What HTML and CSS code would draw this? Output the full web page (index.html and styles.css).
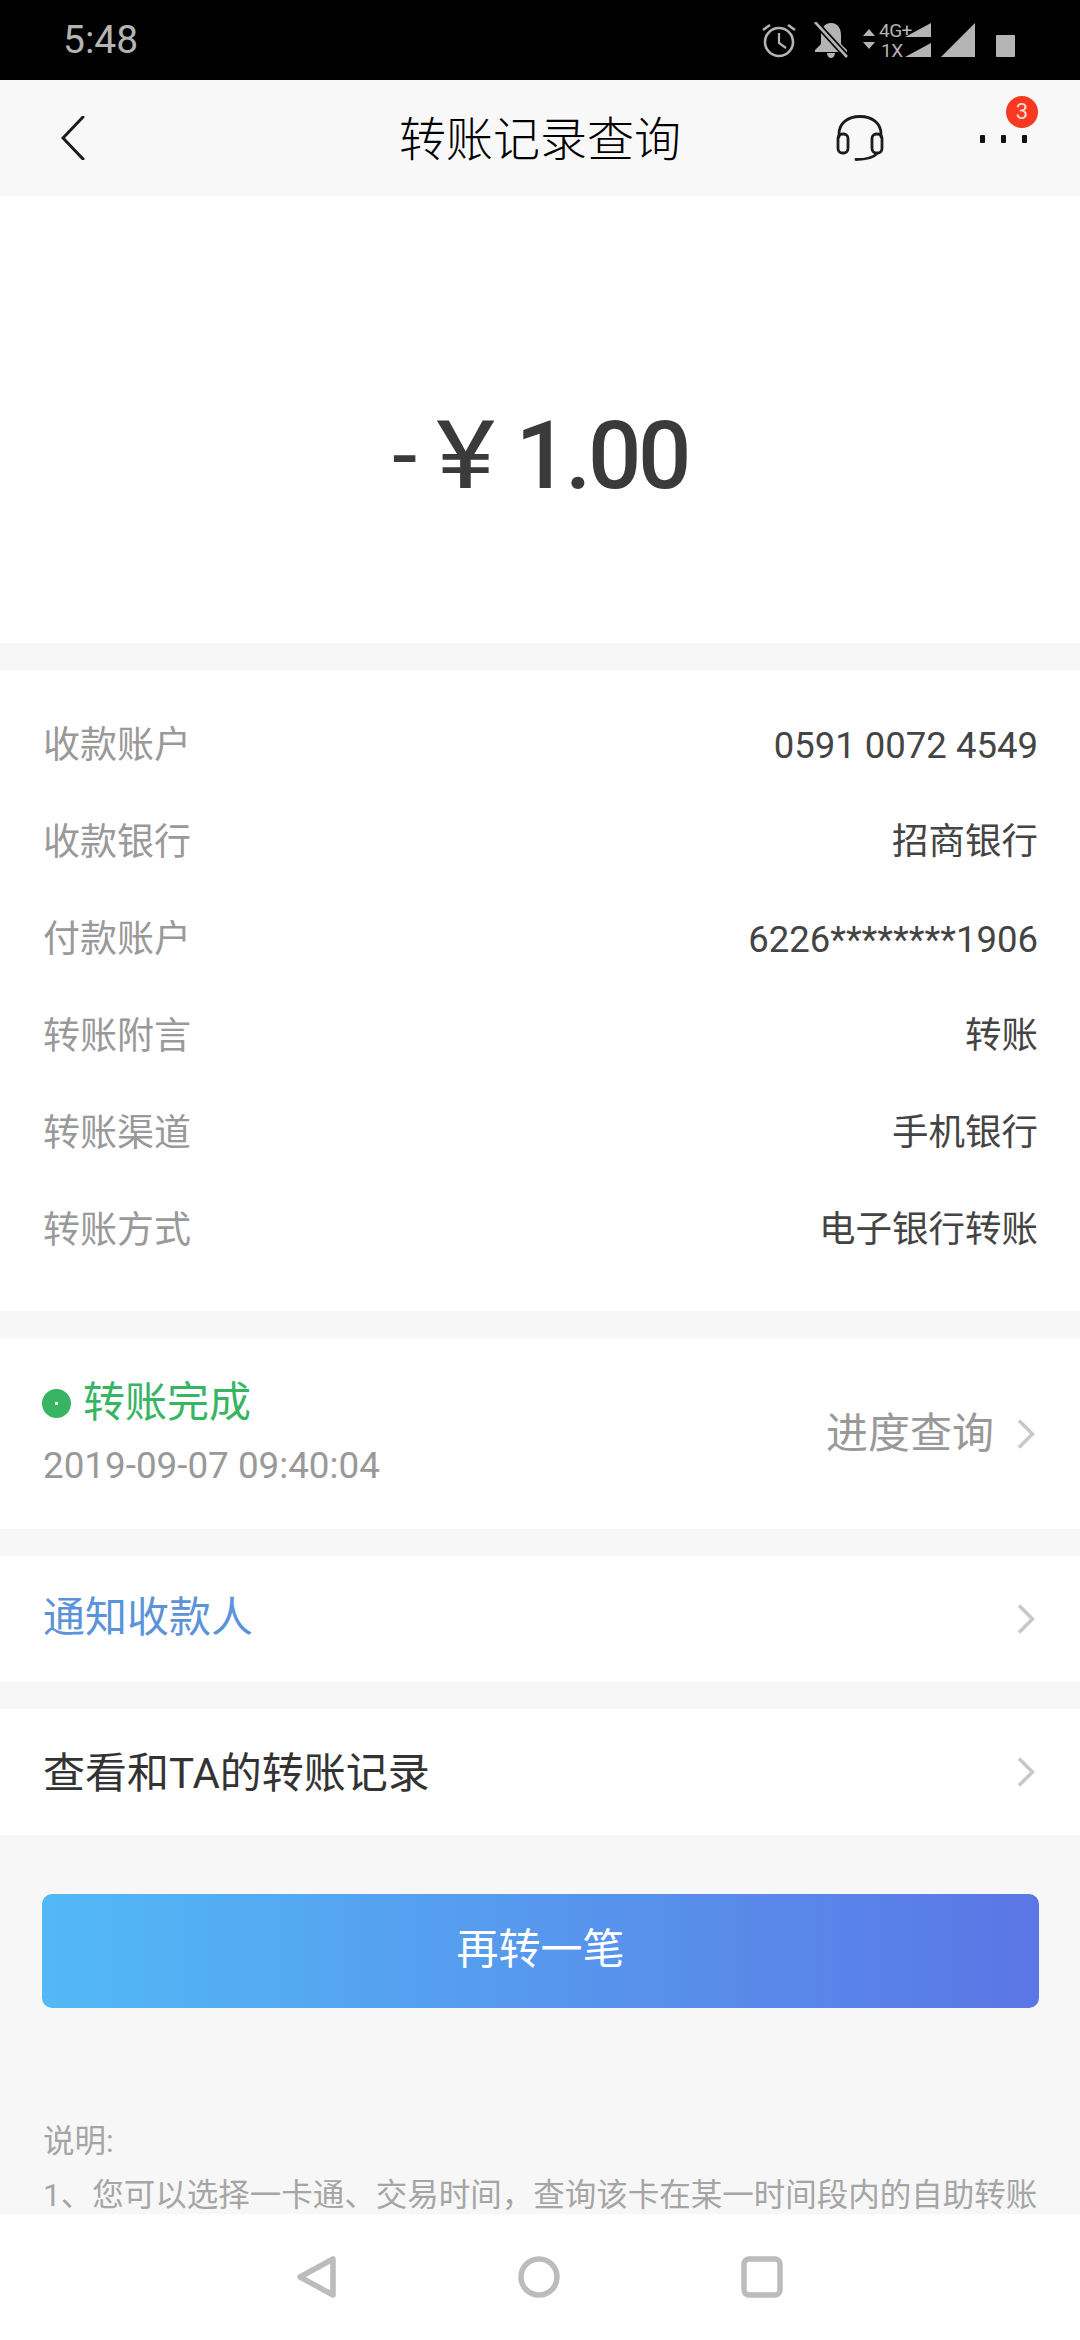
FILE: index.html
```html
<!DOCTYPE html>
<html lang="zh-CN">
<head>
  <meta charset="UTF-8" />
  <title>转账记录查询</title>
  <link rel="stylesheet" href="styles.css">
</head>
<body>
  <div class="phone">
    <div class="status-bar">
      <span class="clock">5:48</span>
      <div class="status-icons">
        <svg class="ic-alarm" width="36" height="36" viewBox="0 0 36 36" fill="none" stroke="#b4b4b4" stroke-width="2.6">
          <circle cx="18" cy="20" r="14"/>
          <path d="M18 11v10l7 5" stroke-width="2.2"/>
          <path d="M2 8l7-5M34 8l-7-5"/>
        </svg>
        <svg class="ic-bell" width="36" height="36" viewBox="0 0 36 36">
          <path fill="#b4b4b4" d="M18 1c-7 0-10 6-10 12v9l-6 6v2h32v-2l-6-6v-9c0-6-3-12-10-12zM14 31h8c0 3-2 5-4 5s-4-2-4-5z"/>
          <path d="M2 0l32 35" stroke="#000" stroke-width="6"/>
          <path d="M2 0l32 35" stroke="#b4b4b4" stroke-width="2.6"/>
        </svg>
        <svg class="ic-net" width="70" height="48" viewBox="0 -6 70 48" fill="#b4b4b4">
          <path d="M1 8l6-7 6 7zM1 14l6 7 6-7z" transform="translate(1 6)"/>
          <text class="net-label" x="18" y="15">4G+</text>
          <text class="net-label" x="20" y="35">1X</text>
          <path d="M44 15l26-14v14zM44 35l26-14v14z"/>
        </svg>
        <svg class="ic-signal" width="36" height="36" viewBox="0 0 36 36" fill="#b4b4b4">
          <path d="M1 35L35 1v34z"/>
        </svg>
        <div class="battery"></div>
      </div>
    </div>

    <header class="top-bar">
      <svg class="back" width="24" height="44" viewBox="0 0 24 44" fill="none" stroke="#1c1c1c" stroke-width="3" stroke-linecap="round">
        <path d="M22 1L2 22l20 21"/>
      </svg>
      <h1 class="title">转账记录查询</h1>
      <svg class="headset" width="48" height="46" viewBox="0 0 48 46" fill="none" stroke="#1c1c1c" stroke-width="2.8" stroke-linecap="round">
        <path d="M3 22V19C3 8 12 1.500 24 1.500S45 8 45 19v3"/>
        <rect x="2" y="19" width="10" height="19" rx="4.500"/>
        <rect x="36" y="19" width="10" height="19" rx="4.500"/>
        <path d="M20 44.500c9 0 17-1 21-6"/>
      </svg>
      <div class="more">
        <span class="dot"></span><span class="dot"></span><span class="dot"></span>
        <span class="badge">3</span>
      </div>
    </header>

    <section class="amount-box">
      <span class="amount-sign">-</span>
      <span class="amount-yen">¥</span>
      <span class="amount-num">1.00</span>
    </section>

    <section class="info card">
      <div class="info-row"><span class="info-label">收款账户</span><span class="info-value num">0591 0072 4549</span></div>
      <div class="info-row"><span class="info-label">收款银行</span><span class="info-value">招商银行</span></div>
      <div class="info-row"><span class="info-label">付款账户</span><span class="info-value num">6226********1906</span></div>
      <div class="info-row"><span class="info-label">转账附言</span><span class="info-value">转账</span></div>
      <div class="info-row"><span class="info-label">转账渠道</span><span class="info-value">手机银行</span></div>
      <div class="info-row"><span class="info-label">转账方式</span><span class="info-value">电子银行转账</span></div>
    </section>

    <section class="progress card">
      <div class="progress-left">
        <div class="progress-state"><span class="state-dot"></span>转账完成</div>
        <div class="progress-time">2019-09-07 09:40:04</div>
      </div>
      <span class="progress-link">进度查询</span>
      <svg class="chevron" width="18" height="30" viewBox="0 0 18 30" fill="none" stroke="#c8c8c8" stroke-width="3.600"><path d="M2 1.500L15.500 15 2 28.500"/></svg>
    </section>

    <a class="link-row card notify">
      <span>通知收款人</span>
      <svg class="chevron" width="18" height="30" viewBox="0 0 18 30" fill="none" stroke="#c8c8c8" stroke-width="3.600"><path d="M2 1.500L15.500 15 2 28.500"/></svg>
    </a>
    <a class="link-row card history">
      <span>查看和TA的转账记录</span>
      <svg class="chevron" width="18" height="30" viewBox="0 0 18 30" fill="none" stroke="#c8c8c8" stroke-width="3.600"><path d="M2 1.500L15.500 15 2 28.500"/></svg>
    </a>

    <div class="action">
      <button class="again-btn">再转一笔</button>
    </div>

    <div class="notes">
      <p>说明:</p>
      <p>1、您可以选择一卡通、交易时间，查询该卡在某一时间段内的自助转账</p>
    </div>

    <nav class="nav-bar">
      <svg width="40" height="42" viewBox="0 0 40 42" fill="none" stroke="#bcbcbc" stroke-width="5.500" stroke-linejoin="round"><path d="M36 3v36L3 21z"/></svg>
      <svg width="42" height="42" viewBox="0 0 42 42" fill="none" stroke="#bcbcbc" stroke-width="5.500"><circle cx="21" cy="21" r="18"/></svg>
      <svg width="42" height="42" viewBox="0 0 42 42" fill="none" stroke="#bcbcbc" stroke-width="5.500"><rect x="3" y="3" width="36" height="36" rx="5"/></svg>
    </nav>
  </div>
</body>
</html>
```

FILE: styles.css
```css
html, body {
  margin: 0;
  padding: 0;
  background: #f7f7f7;
}
body {
  font-family: Roboto, "Noto Sans CJK SC", sans-serif;
}
.phone {
  width: 1080px;
  height: 2340px;
  display: flex;
  flex-direction: column;
  overflow: hidden;
}
.status-bar {
  height: 80px;
  flex: none;
  background: #000;
  display: flex;
  align-items: center;
  justify-content: space-between;
  padding: 0 65px 0 63px;
}
.clock {
  color: #b4b4b4;
  font-size: 39px;
}
.status-icons {
  display: flex;
  align-items: center;
}
.status-icons svg {
  display: block;
}
.ic-alarm { margin-right: 16px; }
.ic-bell { margin-right: 12px; }
.ic-net { margin-right: 9px; }
.ic-signal { margin-right: 20px; }
.net-label {
  font-family: Roboto, sans-serif;
  font-size: 19px;
  letter-spacing: -0.5px;
}
.battery {
  width: 19px;
  height: 22px;
  margin-top: 12px;
  background: #b4b4b4;
  border-radius: 1px;
}
.top-bar {
  height: 116px;
  flex: none;
  box-sizing: border-box;
  padding-bottom: 6px;
  background: #f8f8f8;
  position: relative;
  display: flex;
  align-items: center;
  justify-content: center;
}
.back {
  position: absolute;
  left: 61px;
  top: 36px;
}
.title {
  margin: 0;
  font-size: 47px;
  font-weight: 300;
  color: #000;
}
.headset {
  position: absolute;
  left: 836px;
  top: 35px;
}
.more {
  position: absolute;
  left: 980px;
  top: 55px;
  display: flex;
  gap: 16px;
}
.dot {
  width: 5px;
  height: 8px;
  border-radius: 1px;
  background: #111;
}
.badge {
  position: absolute;
  left: 26px;
  top: -39px;
  width: 32px;
  height: 32px;
  border-radius: 50%;
  background: #f8391f;
  color: #fbd9d3;
  font-size: 22px;
  line-height: 32px;
  text-align: center;
}
.amount-box {
  height: 447px;
  flex: none;
  box-sizing: border-box;
  padding-top: 72px;
  background: #fff;
  display: flex;
  align-items: center;
  justify-content: center;
  color: #3a3a3a;
}
.amount-sign {
  font-size: 90px;
  margin-right: 24px;
}
.amount-yen {
  display: inline-block;
  font-size: 94px;
  margin-right: 25px;
  transform: scaleX(1.2);
}
.amount-num {
  font-size: 94px;
  font-weight: 500;
  letter-spacing: -3.5px;
}
.card {
  background: #fff;
}
.info {
  margin-top: 27px;
  padding: 24px 42px 35px 43px;
}
.info-row {
  height: 97px;
  display: flex;
  align-items: center;
  justify-content: space-between;
  font-size: 37px;
}
.info-row span {
  margin-bottom: 2px;
}
.info-label {
  color: #999;
}
.info-value {
  color: #444;
  font-size: 36.500px;
}
.info-row .num {
  margin: 6px 0 0;
}
.progress {
  margin-top: 27px;
  height: 191px;
  padding: 0 45px 0 43px;
  display: flex;
  align-items: center;
}
.progress-left {
  flex: 1;
  padding-bottom: 5px;
}
.progress-state {
  display: flex;
  align-items: center;
  color: #37b563;
  font-size: 42px;
  line-height: 56px;
}
.state-dot {
  width: 29px;
  height: 29px;
  margin: 0 12px 0 -1px;
  border-radius: 50%;
  background: #37b563;
  position: relative;
}
.state-dot::after {
  content: "";
  position: absolute;
  left: 13px;
  top: 13px;
  width: 3px;
  height: 3px;
  background: #fff;
}
.progress-time {
  margin-top: 13px;
  color: #999;
  font-size: 36.800px;
}
.progress-link {
  color: #999;
  font-size: 42px;
  margin: 0 23px 8px 0;
}
.link-row {
  margin-top: 27px;
  height: 126px;
  padding: 0 45px 0 43px;
  display: flex;
  align-items: center;
  justify-content: space-between;
  font-size: 42px;
}
.notify {
  color: #5b93db;
}
.notify span {
  margin-bottom: 12px;
}
.history {
  color: #333;
}
.history span {
  margin-bottom: 6px;
}
.action {
  padding: 59px 41px 0 42px;
}
.again-btn {
  display: block;
  width: 100%;
  height: 114px;
  padding: 0 0 12px;
  border: none;
  border-radius: 10px;
  background: linear-gradient(to right, #52b9f6, #5b76e5);
  color: #fff;
  font-family: inherit;
  font-size: 42px;
}
.notes {
  flex: 1;
  min-height: 0;
  overflow: hidden;
  padding: 116px 0 0 43px;
  color: #a5a5a5;
  font-size: 31.500px;
  line-height: 36px;
}
.notes p {
  margin: 0 0 18px;
  white-space: nowrap;
}
.nav-bar {
  height: 126px;
  flex: none;
  background: #fff;
  display: flex;
  align-items: center;
  justify-content: center;
  gap: 181px;
}
```
